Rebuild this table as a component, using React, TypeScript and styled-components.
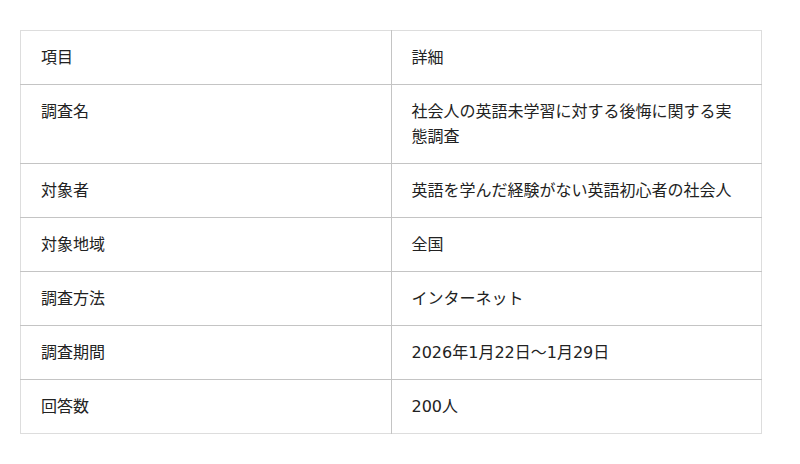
import React from "react";
import styled, { createGlobalStyle } from "styled-components";

const GlobalStyle = createGlobalStyle`
  html, body {
    margin: 0;
    padding: 0;
    background: #ffffff;
  }
  body {
    font-family: "DejaVu Sans", "Noto Sans CJK JP", sans-serif;
    color: #222;
  }
`;

const rows: [string, string][] = [
  ["項目", "詳細"],
  ["調査名", "社会人の英語未学習に対する後悔に関する実態調査"],
  ["対象者", "英語を学んだ経験がない英語初心者の社会人"],
  ["対象地域", "全国"],
  ["調査方法", "インターネット"],
  ["調査期間", "2026年1月22日〜1月29日"],
  ["回答数", "200人"],
];

const Page = styled.div`
  padding: 30px 38px 30px 20px;
`;

const Table = styled.table`
  width: 742px;
  border-collapse: collapse;
  table-layout: fixed;
  border: 1px solid #dddddd;
`;

const Row = styled.tr`
  border-bottom: 1px solid #c4c4c4;

  &:last-child {
    border-bottom: 1px solid #dddddd;
  }
`;

const Cell = styled.td<{ $first?: boolean }>`
  width: 50%;
  padding: 14px 20px 14px 20px;
  font-size: 16px;
  line-height: 25px;
  vertical-align: top;
  color: #222;
  border-right: ${({ $first }) => ($first ? "1px solid #c4c4c4" : "none")};
`;

export default function App() {
  return (
    <Page>
      <GlobalStyle />
      <Table>
        <tbody>
          {rows.map(([k, v]) => (
            <Row key={k}>
              <Cell $first>{k}</Cell>
              <Cell>{v}</Cell>
            </Row>
          ))}
        </tbody>
      </Table>
    </Page>
  );
}
